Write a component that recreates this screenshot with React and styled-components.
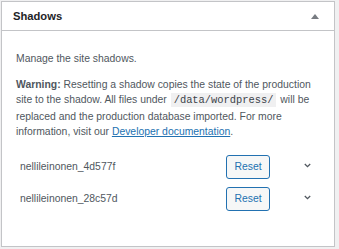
import React from "react";
import styled, { createGlobalStyle } from "styled-components";

const Global = createGlobalStyle`
  html, body { margin: 0; padding: 0; background: #f0f0f1; }
  body { font-family: "Liberation Sans", Arial, sans-serif; }
  #root { padding: 1px 4px 2px 1px; }
`;

const Panel = styled.section`
  width: 334px;
  height: 246px;
  box-sizing: border-box;
  background: #fff;
  border: 1px solid #c3c4c7;
  display: flex;
  flex-direction: column;
`;

const Header = styled.header`
  height: 29px;
  box-sizing: border-box;
  border-bottom: 1px solid #c3c4c7;
  display: flex;
  align-items: center;
  justify-content: space-between;
  padding: 0 14px 0 11px;
`;

const Title = styled.h2`
  margin: 0;
  font-size: 11.2px;
  font-weight: 700;
  color: #1d2327;
`;

const Toggle = styled.button`
  border: 0;
  background: none;
  padding: 0;
  width: 10px;
  height: 10px;
  display: flex;
  align-items: center;
  justify-content: center;
`;

const Body = styled.div`
  padding: 20px 12px 0 14px;
  font-size: 10.4px;
  line-height: 15.6px;
  color: #50575e;
`;

const P = styled.p`
  margin: 0 0 10px;
`;

const Code = styled.code`
  font-family: "Liberation Mono", "Courier New", monospace;
  font-size: 10.4px;
  background: #f0f0f1;
  padding: 1px 3px;
  margin: 0 1px;
  color: #3c434a;
`;

const Link = styled.a`
  color: #2271b1;
  text-decoration: underline;
`;

const List = styled.div`
  margin-top: 15px;
  display: flex;
  flex-direction: column;
  gap: 8px;
`;

const Row = styled.div`
  display: grid;
  grid-template-columns: 1fr 44px 52px;
  align-items: center;
  padding-left: 4px;
  color: #50575e;
`;

const Button = styled.button`
  height: 24px;
  box-sizing: border-box;
  border: 1px solid #2271b1;
  border-radius: 3px;
  background: #f6f7f7;
  color: #2271b1;
  font-family: "Liberation Sans", Arial, sans-serif;
  font-size: 10.4px;
  padding: 0;
`;

const Chevron = styled.span`
  display: flex;
  justify-content: center;
  padding-left: 22px;
  padding-bottom: 2px;
`;

const shadows = ["nellileinonen_4d577f", "nellileinonen_28c57d"];

export default function App() {
  return (
    <>
      <Global />
      <Panel>
        <Header>
          <Title>Shadows</Title>
          <Toggle aria-label="Toggle panel">
            <svg width="8" height="5" viewBox="0 0 8 5">
              <path d="M0 5 L4 0 L8 5 Z" fill="#787c82" />
            </svg>
          </Toggle>
        </Header>
        <Body>
          <P>Manage the site shadows.</P>
          <P>
            <strong>Warning:</strong> Resetting a shadow copies the state of the production
            site to the shadow. All files under <Code>/data/wordpress/</Code> will be
            replaced and the production database imported. For more information, visit our{" "}
            <Link href="#">Developer documentation</Link>.
          </P>
          <List>
            {shadows.map((s) => (
              <Row key={s}>
                <span>{s}</span>
                <Button>Reset</Button>
                <Chevron>
                  <svg width="7" height="5" viewBox="0 0 7 5">
                    <path d="M0.8 1 L3.5 3.6 L6.2 1" fill="none" stroke="#50575e" strokeWidth="1.3" />
                  </svg>
                </Chevron>
              </Row>
            ))}
          </List>
        </Body>
      </Panel>
    </>
  );
}
